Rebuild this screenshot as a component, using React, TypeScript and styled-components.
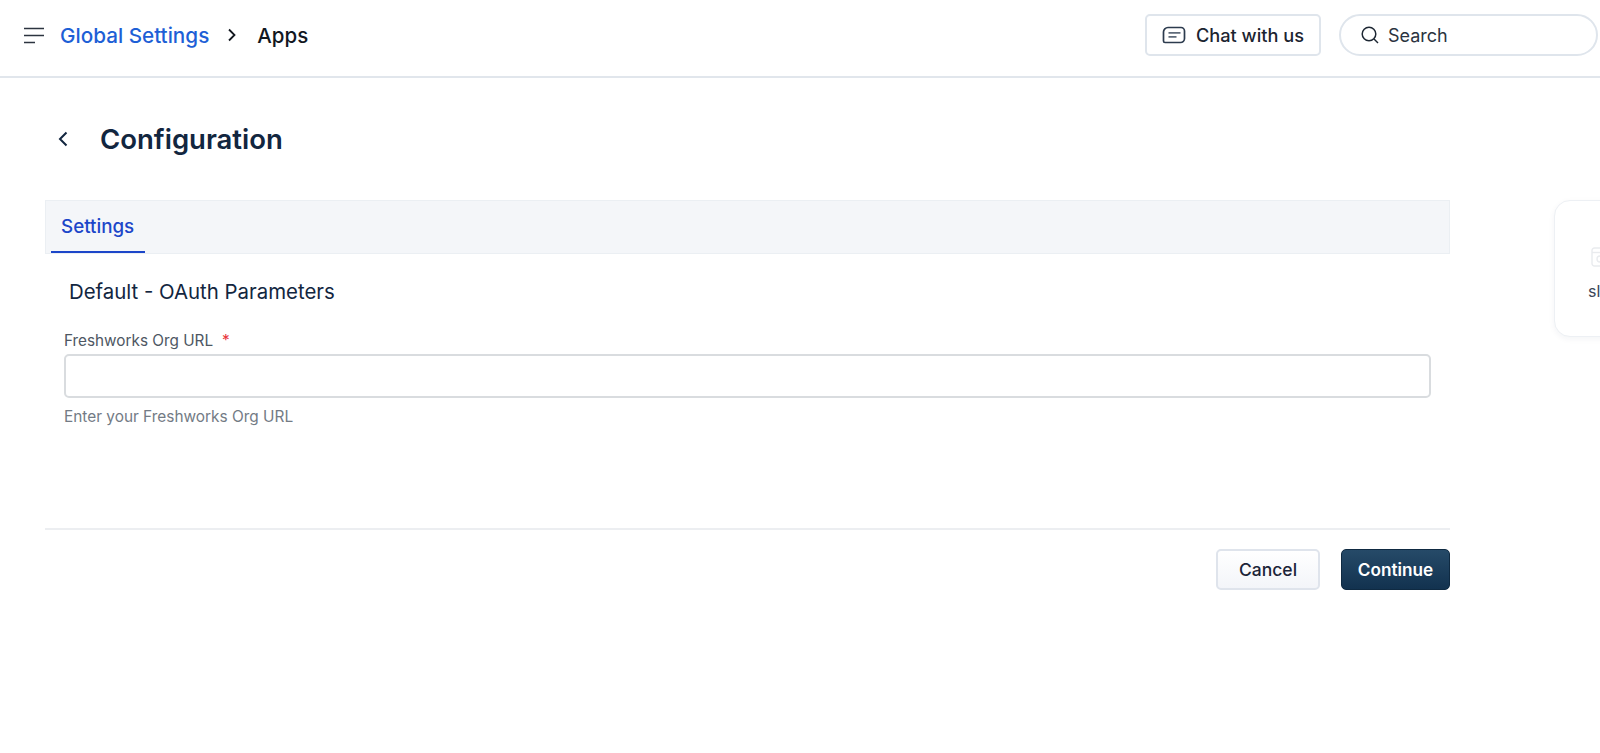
import styled, { createGlobalStyle } from "styled-components";

const GlobalStyle = createGlobalStyle`
html, body {
    margin: 0;
    padding: 0;
    background: #fff;
    overflow: hidden;
}
body {
    font-family: Inter, "Liberation Sans", sans-serif;
}
* {
    box-sizing: border-box;
}
`

export default function App() {
    return (
        <Page>
            <GlobalStyle />
            <Header>
                <MenuIcon width="24" height="20" viewBox="0 0 24 20" fill="none" stroke="#2c3440" strokeWidth="1.6">
                    <path d="M1 3.500h20M1 10.500h20M1 17.500h11" />
                </MenuIcon>
                <Crumb>Global Settings</Crumb>
                <CrumbArrow width="10" height="16" viewBox="0 0 10 16" fill="none" stroke="#12171f" strokeWidth="1.8">
                    <path d="M2 2.500 7.500 8 2 13.500" />
                </CrumbArrow>
                <Current>Apps</Current>
                <HeaderRight>
                    <ChatButton>
                        <svg width="24" height="18" viewBox="0 0 24 18" fill="none">
                            <path d="M6 1.500h13a3.500 3.500 0 0 1 3.500 3.500v7.500a4 4 0 0 1-4 4H3a1.500 1.500 0 0 1-1.500-1.500V6A4.500 4.500 0 0 1 6 1.500Z" stroke="#2c3b4e" strokeWidth="1.7" />
                            <path d="M6.500 6.800h12M6.500 10.800h8" stroke="#5f6b7a" strokeWidth="1.700" />
                        </svg>
                        Chat with us
                    </ChatButton>
                    <SearchBox>
                        <svg width="20" height="20" viewBox="0 0 20 20" fill="none" stroke="#1d2733" strokeWidth="1.5">
                            <circle cx="9" cy="9" r="6.800" />
                            <path d="m14 14 4 4" />
                        </svg>
                        Search
                    </SearchBox>
                </HeaderRight>
            </Header>
            <TitleRow>
                <svg width="12" height="18" viewBox="0 0 12 18" fill="none" stroke="#12263f" strokeWidth="2">
                    <path d="M9.500 2.500 3 9l6.500 6.500" />
                </svg>
                <Title>Configuration</Title>
            </TitleRow>
            <Content>
                <FormColumn>
                    <TabBar>
                        <Tab>Settings</Tab>
                    </TabBar>
                    <Section>Default - OAuth Parameters</Section>
                    <Field>
                        <Label>Freshworks Org URL<Required>*</Required></Label>
                        <Input />
                        <Hint>Enter your Freshworks Org URL</Hint>
                    </Field>
                    <Footer>
                        <CancelButton>Cancel</CancelButton>
                        <ContinueButton>Continue</ContinueButton>
                    </Footer>
                </FormColumn>
                <AppCard>
                    <CardIcon width="20" height="20" viewBox="0 0 20 20" fill="none" stroke="#e9ebee" strokeWidth="1.4">
                        <rect x="1" y="1" width="18" height="18" rx="2.500" />
                        <path d="M1 5.500h18" />
                        <circle cx="9" cy="12" r="3" />
                    </CardIcon>
                    <CardName>slack</CardName>
                </AppCard>
            </Content>
        </Page>
    )
}

const Page = styled.div`
width: 1600px;
height: 753px;
overflow: hidden;
background: #fff;
`

const Header = styled.header`
height: 78px;
display: flex;
align-items: center;
padding: 0 2px 6px 23px;
border-bottom: 2px solid #e1e6ec;
`

const MenuIcon = styled.svg`
margin-right: 13px;
`

const Crumb = styled.span`
font-size: 20.7px;
font-weight: 500;
color: #1e5fd6;
`

const CrumbArrow = styled.svg`
margin: 0 20px 0 18px;
`

const Current = styled.span`
font-size: 20.5px;
font-weight: 500;
color: #12171f;
`

const HeaderRight = styled.div`
margin-left: auto;
display: flex;
align-items: center;
gap: 18px;
`

const ChatButton = styled.button`
width: 176px;
height: 42px;
display: flex;
align-items: center;
justify-content: center;
gap: 10px;
background: #fff;
border: 2px solid #dfe5ec;
border-radius: 5px;
font-family: inherit;
font-size: 18.2px;
font-weight: 500;
color: #1b2430;
padding: 0;
`

const SearchBox = styled.div`
width: 259px;
height: 42px;
display: flex;
align-items: center;
gap: 8px;
padding-left: 19px;
border: 2px solid #dfe5ec;
border-radius: 21px;
font-size: 18px;
color: #2a3340;
`

const TitleRow = styled.div`
display: flex;
align-items: center;
gap: 31px;
padding-left: 57px;
height: 122px;
`

const Title = styled.h1`
margin: 0;
font-size: 27.5px;
font-weight: 600;
color: #12263f;
`

const Content = styled.main`
display: flex;
align-items: flex-start;
gap: 104px;
padding-left: 45px;
`

const FormColumn = styled.div`
width: 1405px;
flex-shrink: 0;
`

const TabBar = styled.div`
height: 54px;
display: flex;
padding-left: 5px;
background: #f4f6f9;
border: 1px solid #ebeff3;
`

const Tab = styled.div`
width: 94px;
display: flex;
align-items: center;
padding-left: 10px;
font-size: 18.8px;
font-weight: 500;
color: #1c46c9;
border-bottom: 2px solid #1c46c9;
`

const Section = styled.h2`
margin: 26px 0 0 24px;
font-size: 20.4px;
font-weight: 400;
line-height: 24px;
color: #12263f;
`

const Field = styled.div`
margin: 28px 19px 0 19px;
`

const Label = styled.label`
display: block;
font-size: 15.3px;
line-height: 18px;
color: #4e5763;
`

const Required = styled.span`
margin-left: 9px;
color: #e8333a;
`

const Input = styled.div`
height: 44px;
margin-top: 4px;
background: #fff;
border: 2px solid #d9dcdf;
border-radius: 5px;
`

const Hint = styled.div`
margin-top: 10px;
font-size: 15.4px;
line-height: 18px;
color: #737b85;
`

const Footer = styled.div`
margin-top: 102px;
padding-top: 19px;
display: flex;
justify-content: flex-end;
gap: 21px;
border-top: 2px solid #eceef1;
`

const CancelButton = styled.button`
width: 104px;
height: 41px;
background: linear-gradient(#fff, #f3f5f9);
border: 2px solid #dfe4ec;
border-radius: 5px;
font-family: inherit;
font-size: 17.5px;
font-weight: 500;
color: #1b2438;
padding: 0;
`

const ContinueButton = styled.button`
width: 109px;
height: 41px;
background: linear-gradient(#264a68, #12324f);
border: 1px solid #0f2a42;
border-radius: 5px;
font-family: inherit;
font-size: 17.2px;
font-weight: 600;
color: #fff;
padding: 0;
`

const AppCard = styled.aside`
width: 200px;
height: 137px;
flex-shrink: 0;
padding: 46px 0 0 33px;
display: flex;
flex-direction: column;
align-items: flex-start;
gap: 14px;
background: #fff;
border: 1px solid #edf0f4;
border-radius: 16px;
box-shadow: 0 2px 6px rgba(20, 40, 70, 0.05);
`

const CardIcon = styled.svg`
margin-left: 3px;
`

const CardName = styled.span`
font-size: 16px;
line-height: 20px;
color: #3a4656;
`
